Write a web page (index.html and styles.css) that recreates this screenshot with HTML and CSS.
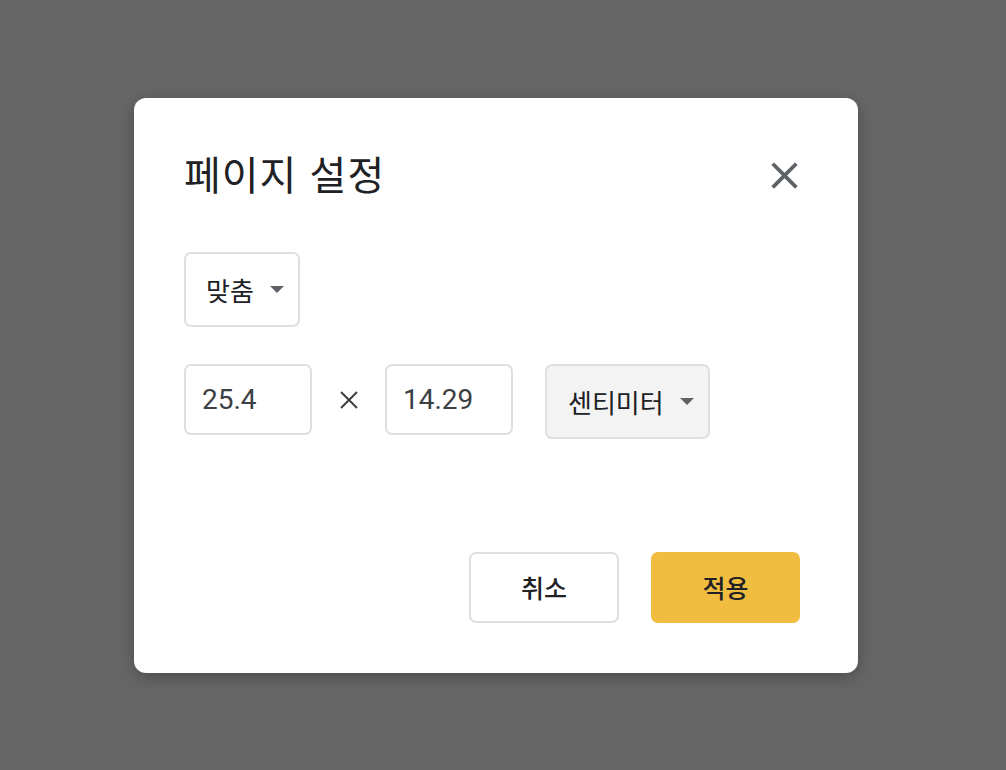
FILE: index.html
```html
<!DOCTYPE html>
<html lang="ko">
<head>
<meta charset="utf-8">
<link rel="stylesheet" href="styles.css">
</head>
<body>
<div class="dialog">
  <div class="title-row">
    <h1 class="title">페이지 설정</h1>
    <button class="close" aria-label="닫기">
      <svg width="45" height="45" viewBox="0 0 24 24"><path fill="#5f6368" d="M19 6.41L17.59 5 12 10.59 6.41 5 5 6.41 10.59 12 5 17.59 6.41 19 12 13.41 17.59 19 19 17.59 13.41 12z"/></svg>
    </button>
  </div>
  <div class="preset-row">
    <div class="select preset">
      <span>맞춤</span>
      <span class="caret"></span>
    </div>
  </div>
  <div class="size-row">
    <div class="field">25.4</div>
    <div class="times">
      <svg width="20" height="20" viewBox="0 0 20 20"><path d="M2 2L18 18M18 2L2 18" stroke="#3c4043" stroke-width="2"/></svg>
    </div>
    <div class="field">14.29</div>
    <div class="select unit">
      <span>센티미터</span>
      <span class="caret"></span>
    </div>
  </div>
  <div class="actions">
    <button class="btn cancel">취소</button>
    <button class="btn apply">적용</button>
  </div>
</div>
</body>
</html>
```
FILE: styles.css
```css
* { box-sizing: border-box; }
html, body { height: 100%; }
body {
  margin: 0;
  background: #666666;
  display: flex;
  align-items: center;
  padding-left: 134px;
  font-family: "Noto Sans CJK KR", "Noto Sans", sans-serif;
  color: #202124;
}
.dialog {
  width: 724px;
  height: 575px;
  background: #ffffff;
  border-radius: 12px;
  box-shadow: 0 4px 16px rgba(0,0,0,0.25);
  padding: 50px 58px 50px 50px;
  display: flex;
  flex-direction: column;
}
.title-row {
  height: 56px;
  display: flex;
  align-items: center;
  justify-content: space-between;
}
.title {
  margin: 0;
  font-size: 40px;
  font-weight: 400;
  letter-spacing: 1px;
  line-height: 50px;
  padding-bottom: 5px;
  color: #202124;
}
.close {
  border: 0;
  background: none;
  padding: 0;
  width: 45px;
  height: 45px;
  margin-right: -7px;
  display: flex;
}
.preset-row {
  margin-top: 48px;
  display: flex;
}
.select {
  height: 75px;
  border: 2px solid #dfdfe2;
  border-radius: 7px;
  display: flex;
  align-items: center;
  font-size: 26px;
  color: #202124;
}
.preset {
  width: 116px;
  padding-left: 20px;
}
.preset .caret { margin-left: 16px; }
.caret {
  width: 0;
  height: 0;
  border-left: 7.5px solid transparent;
  border-right: 7.5px solid transparent;
  border-top: 7px solid #5f6368;
}
.size-row {
  margin-top: 37px;
  display: flex;
  align-items: flex-start;
}
.field {
  width: 128px;
  height: 71px;
  border: 2px solid #dfdfe2;
  border-radius: 7px;
  display: flex;
  align-items: center;
  padding-left: 16px;
  font-family: Roboto, "Noto Sans", sans-serif;
  font-size: 28px;
  color: #3c4043;
}
.times {
  width: 73px;
  height: 71px;
  display: flex;
  align-items: center;
  justify-content: center;
  padding-top: 2px;
}
.unit {
  width: 165px;
  margin-left: 32px;
  padding-left: 21px;
  background: #f3f3f3;
}
.unit .caret { margin-left: 16px; }
.actions {
  margin-top: auto;
  display: flex;
  justify-content: flex-end;
  gap: 32px;
}
.btn {
  width: 150px;
  height: 71px;
  border-radius: 7px;
  font-family: "Noto Sans CJK KR", sans-serif;
  font-size: 25px;
  font-weight: 500;
  color: #202124;
  padding: 0;
}
.cancel {
  background: #ffffff;
  border: 2px solid #dfdfe2;
}
.apply {
  width: 149px;
  background: #f1bd41;
  border: 0;
}
```
